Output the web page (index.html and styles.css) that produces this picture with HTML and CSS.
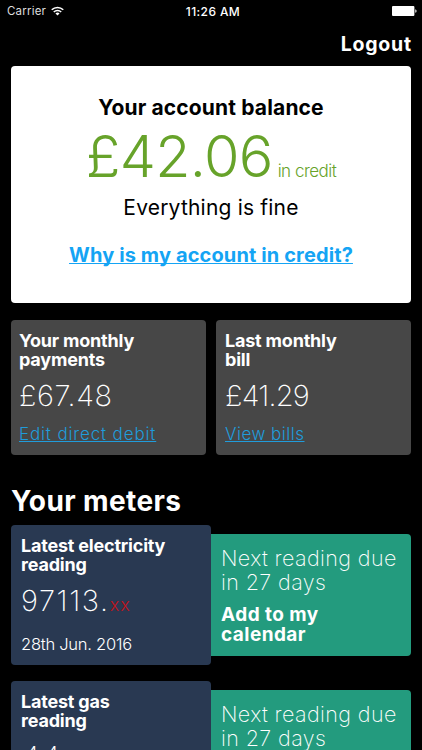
FILE: index.html
```html
<!DOCTYPE html>
<html lang="en">
<head>
    <meta charset="UTF-8">
    <meta name="viewport" content="width=device-width, initial-scale=1.0">
    <title>Your account</title>
    <link rel="stylesheet" href="styles.css">
</head>
<body>
    <div class="status-bar">
        <div class="carrier">
            <span>Carrier</span>
            <svg class="wifi" width="13" height="10" viewBox="0 0 14 10">
                <path d="M.8 3.7a8.8 8.8 0 0 1 12.4 0M3 6.1a5.7 5.7 0 0 1 8 0" fill="none" stroke="#fff" stroke-width="1.7"/>
                <path d="M7 9.9 4.8 7.7a3.1 3.1 0 0 1 4.4 0z" fill="#fff"/>
            </svg>
        </div>
        <div class="clock">11:26 AM</div>
        <div class="battery">
            <svg width="25" height="10" viewBox="0 0 25 10">
                <rect x="0" y="0" width="22.4" height="10" rx="1" fill="#fff"/>
                <path d="M23.3 3.2a1.9 1.9 0 0 1 0 3.6z" fill="#fff"/>
            </svg>
        </div>
    </div>

    <div class="top-nav"><a href="#" class="logout">Logout</a></div>

    <div class="content">
        <div class="balance-card">
            <h1 class="balance-title">Your account balance</h1>
            <div class="balance"><span class="balance-amount">£42.06</span><span class="balance-state">in credit</span></div>
            <p class="balance-note">Everything is fine</p>
            <a href="#" class="balance-link">Why is my account in credit?</a>
        </div>

        <div class="payments">
            <div class="payment-card">
                <h3 class="card-title">Your monthly<br>payments</h3>
                <div class="payment-amount">£67.48</div>
                <a href="#" class="payment-link">Edit direct debit</a>
            </div>
            <div class="payment-card">
                <h3 class="card-title">Last monthly<br>bill</h3>
                <div class="payment-amount last-bill">£41.29</div>
                <a href="#" class="payment-link bills-link">View bills</a>
            </div>
        </div>

        <h2 class="section-title">Your meters</h2>

        <div class="meter">
            <div class="meter-reading">
                <h3 class="card-title">Latest electricity<br>reading</h3>
                <div class="reading">97113.<span class="reading-decimals">xx</span></div>
                <div class="reading-date">28th Jun. 2016</div>
            </div>
            <div class="meter-next">
                <p class="next-text">Next reading due<br>in 27 days</p>
                <a href="#" class="next-link">Add to my<br>calendar</a>
            </div>
        </div>

        <div class="meter">
            <div class="meter-reading">
                <h3 class="card-title">Latest gas<br>reading</h3>
                <div class="reading gas-reading">44</div>
            </div>
            <div class="meter-next">
                <p class="next-text">Next reading due<br>in 27 days</p>
            </div>
        </div>
    </div>
</body>
</html>
```
FILE: styles.css
```css
* {
    box-sizing: border-box;
    margin: 0;
    padding: 0;
}

body {
    font-family: Inter, "Liberation Sans", sans-serif;
    background: #000;
    color: #fff;
    height: 750px;
    overflow: hidden;
    white-space: nowrap;
}

/* Status bar */
.status-bar {
    display: grid;
    grid-template-columns: 1fr auto 1fr;
    align-items: center;
    height: 22px;
    padding: 0 5px 0 7px;
    font-size: 12px;
}

.carrier {
    display: flex;
    align-items: center;
    gap: 5px;
    color: #ddd;
    font-size: 11.5px;
    letter-spacing: 0.2px;
}

.clock {
    padding-left: 2px;
    font-weight: 500;
    letter-spacing: 0.4px;
}

.battery {
    display: flex;
    justify-content: flex-end;
}

.top-nav {
    display: flex;
    justify-content: flex-end;
    height: 44px;
    padding: 10px 10px 0 0;
}

.logout {
    color: #fff;
    font-size: 19.5px;
    font-weight: 700;
    line-height: 24px;
    letter-spacing: 0.8px;
    text-decoration: none;
}

.content {
    padding: 0 11px;
}

/* Balance */
.balance-card {
    height: 237px;
    padding-top: 30px;
    border-radius: 4px;
    background: #fff;
    color: #000;
    text-align: center;
}

.balance-title {
    font-size: 21px;
    line-height: 24px;
    letter-spacing: 0.15px;
}

.balance {
    display: flex;
    justify-content: center;
    align-items: baseline;
    gap: 5px;
    height: 60px;
    margin-top: 6px;
    color: #67a32a;
    line-height: 60px;
}

.balance-amount {
    font-size: 57.5px;
    font-weight: 300;
    letter-spacing: -0.7px;
}

.balance-state {
    font-size: 17px;
    font-weight: 300;
    letter-spacing: -0.5px;
}

.balance-note {
    margin-top: 9px;
    font-size: 21px;
    line-height: 26px;
    letter-spacing: 0.2px;
}

.balance-link {
    display: inline-block;
    margin-top: 22px;
    color: #14a4f4;
    font-size: 20px;
    font-weight: 700;
    line-height: 24px;
    letter-spacing: 0.12px;
    text-decoration-thickness: 1px;
    text-underline-offset: 1px;
    text-decoration-skip-ink: none;
}

/* Payments */
.payments {
    display: grid;
    grid-template-columns: 1fr 1fr;
    gap: 10px;
    margin-top: 17px;
}

.payment-card {
    height: 135px;
    padding: 12px 8px 0;
    border-radius: 4px;
    background: #474747;
}

.payment-card + .payment-card {
    padding-left: 9px;
}

.card-title {
    font-size: 18px;
    font-weight: 700;
    line-height: 18.5px;
    letter-spacing: -0.2px;
}

.payment-amount {
    margin-top: 10px;
    font-size: 29px;
    font-weight: 200;
    line-height: 34px;
    letter-spacing: 0.6px;
}

.last-bill {
    letter-spacing: -0.8px;
}

.payment-link {
    display: inline-block;
    margin-top: 10px;
    color: #209cdb;
    font-size: 17px;
    font-weight: 300;
    line-height: 22px;
    letter-spacing: 0.85px;
    text-decoration-thickness: 1px;
    text-underline-offset: 1px;
    text-decoration-skip-ink: none;
}

.bills-link {
    letter-spacing: 0.5px;
}

/* Meters */
.section-title {
    margin-top: 30px;
    margin-bottom: 8px;
    font-size: 28px;
    line-height: 32px;
    letter-spacing: 0.4px;
}

.meter {
    display: flex;
    align-items: flex-start;
    height: 140px;
    margin-bottom: 16px;
}

.meter-reading {
    flex: 0 0 200px;
    height: 140px;
    padding: 12px 10px 0;
    border-radius: 4px;
    background: #293952;
}

.reading {
    margin-top: 10px;
    font-size: 29px;
    font-weight: 200;
    line-height: 34px;
    letter-spacing: 1.6px;
}

.gas-reading {
    padding-left: 1px;
    letter-spacing: 2.5px;
}

.reading-decimals {
    color: #c0141c;
    font-size: 18px;
    font-weight: 300;
    letter-spacing: 1px;
}

.reading-date {
    margin-top: 14px;
    font-size: 16.5px;
    font-weight: 300;
    line-height: 16px;
    letter-spacing: -0.25px;
}

.meter-next {
    flex: 1;
    height: 122px;
    margin-top: 9px;
    padding: 12px 10px 0;
    border-radius: 0 4px 4px 0;
    background: #239b7e;
}

/* the last meter runs to the bottom of the screen */
.meter:last-child,
.meter:last-child .meter-reading {
    height: 69px;
    margin-bottom: 0;
    border-radius: 4px 4px 0 0;
}

.meter:last-child .meter-next {
    height: 60px;
    border-radius: 0 4px 0 0;
}

.next-text {
    font-size: 21.5px;
    font-weight: 200;
    line-height: 24px;
    letter-spacing: 0.4px;
}

.next-link {
    display: block;
    margin-top: 11px;
    color: #fff;
    font-size: 19px;
    font-weight: 700;
    line-height: 19.5px;
    letter-spacing: 0.45px;
    text-decoration: none;
}
```
